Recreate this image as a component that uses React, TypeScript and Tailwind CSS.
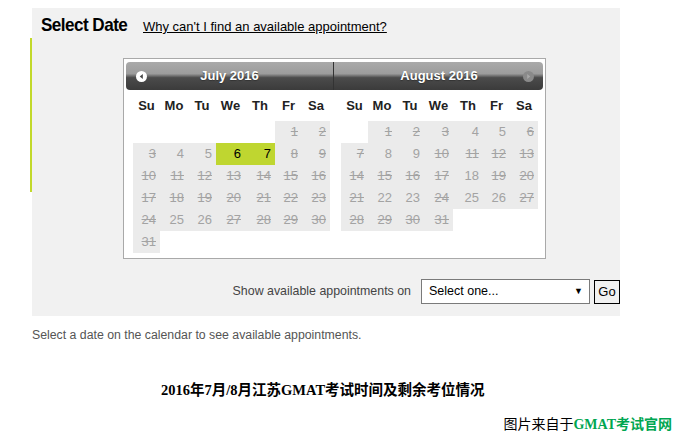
import React from 'react';

type Cell = { day?: number; plain?: boolean; hl?: boolean };

const buildMonth = (lead: number, days: number, plain: number[], hl: number[]): Cell[] => {
  const cells: Cell[] = [];
  for (let i = 0; i < lead; i++) cells.push({});
  for (let d = 1; d <= days; d++) {
    cells.push({ day: d, plain: plain.includes(d), hl: hl.includes(d) });
  }
  return cells;
};

const july = buildMonth(5, 31, [4, 5, 25, 26], [6, 7]);
const august = buildMonth(1, 31, [4, 5, 8, 9, 18, 22, 23, 25, 26], []);

const weekdays = ['Su', 'Mo', 'Tu', 'We', 'Th', 'Fr', 'Sa'];

const PrevIcon = () => (
  <svg width="11" height="11" viewBox="0 0 11 11">
    <circle cx="5.5" cy="5.5" r="5.5" fill="#ffffff" />
    <path d="M6.8 3 L3.8 5.5 L6.8 8 Z" fill="#444" />
  </svg>
);

const NextIcon = () => (
  <svg width="11" height="11" viewBox="0 0 11 11">
    <circle cx="5.5" cy="5.5" r="5.5" fill="#8a8a8a" />
    <path d="M4.2 3 L7.2 5.5 L4.2 8 Z" fill="#a8a8a8" />
  </svg>
);

const MonthGrid = ({ cells }: { cells: Cell[] }) => (
  <div className="ml-[7px]">
    <div className="grid grid-cols-[27px_28px_28px_29px_30px_27px_28px] h-[31px] items-center">
      {weekdays.map((w) => (
        <div key={w} className="text-center text-[13px] font-bold text-[#222]">
          {w}
        </div>
      ))}
    </div>
    <div className="grid grid-cols-[27px_28px_28px_29px_30px_27px_28px] auto-rows-[22px]">
      {cells.map((c, i) =>
        c.day === undefined ? (
          <div key={i} />
        ) : c.hl ? (
          <div key={i} className="bg-[#bfd630] text-right pr-[4px] text-[13px] leading-[22px] text-black">
            {c.day}
          </div>
        ) : (
          <div
            key={i}
            className={
              c.plain
                ? 'bg-[#ebebeb] text-right pr-[4px] text-[13px] leading-[22px] text-[#a3a3a3]'
                : 'bg-[#ebebeb] text-right pr-[4px] text-[13px] leading-[22px] text-[#a3a3a3] line-through'
            }
          >
            {c.day}
          </div>
        )
      )}
    </div>
  </div>
);

const Calendar = () => (
  <div className="w-[423px] h-[201px] border border-[#a9a9a9] bg-white pt-[3px] px-[2px]">
    <div className="flex h-[28px] rounded-[4px] bg-[linear-gradient(#aaaaaa,#9c9c9c_42%,#4b4b4b_56%,#3b3b3b)] text-white text-[13px] font-bold">
      <div className="w-[207px] flex items-center pl-[10px] pr-[10px]">
        <PrevIcon />
        <span className="flex-1 text-center pr-[11px] [text-shadow:0_1px_1px_#333]">July 2016</span>
      </div>
      <div className="w-px bg-[#333]" />
      <div className="flex-1 flex items-center pl-[10px] pr-[9px]">
        <span className="flex-1 text-center pl-[11px] [text-shadow:0_1px_1px_#333]">August 2016</span>
        <NextIcon />
      </div>
    </div>
    <div className="flex">
      <div className="w-[208px]">
        <MonthGrid cells={july} />
      </div>
      <div className="flex-1">
        <MonthGrid cells={august} />
      </div>
    </div>
  </div>
);

export default function App() {
  return (
    <div className="w-[676px] h-[439px] bg-white overflow-hidden font-['Liberation_Sans',Arial,sans-serif]">
      <div className="flex pt-[8px] pl-[30px]">
        <div className="mt-[30px] h-[154px] w-[2px] bg-[#c2d92b]" />
        <div className="w-[588px] h-[308px] bg-[#f1f1f1] flex flex-col">
          <div className="flex items-baseline pl-[9px] pt-[3px] h-[36px]">
            <span className="inline-block text-[19px] font-bold text-black tracking-[-0.6px] origin-left scale-x-90 w-[90px] whitespace-nowrap">
              Select Date
            </span>
            <a href="#" className="ml-[12px] text-[13px] text-black underline">
              Why can't I find an available appointment?
            </a>
          </div>
          <div className="ml-[91px] mt-[14px]">
            <Calendar />
          </div>
          <div className="flex items-center justify-end mt-[20px]">
            <span className="text-[12.4px] text-[#444]">Show available appointments on</span>
            <div className="ml-[10px] w-[169px] h-[25px] border border-[#7a7a7a] bg-white flex items-center justify-between pl-[7px] pr-[6px] text-[12.5px] text-black">
              <span>Select one...</span>
              <span className="text-[9px]">▼</span>
            </div>
            <button className="ml-[4px] w-[26px] h-[24px] border border-black bg-[#f1f1f1] text-[13px] text-black leading-none px-0">
              Go
            </button>
          </div>
        </div>
      </div>
      <p className="mt-[11px] pl-[32px] text-[12.3px] leading-[16px] text-[#555]">
        Select a date on the calendar to see available appointments.
      </p>
      <p className="mt-[37px] pl-[161px] text-[14.5px] leading-[20px] font-bold text-black font-['Liberation_Serif','Noto_Sans_CJK_SC',serif]">
        2016年7月/8月江苏GMAT考试时间及剩余考位情况
      </p>
      <p className="mt-[15px] pr-[4px] text-right text-[14px] leading-[20px] text-black font-['Liberation_Serif','Noto_Sans_CJK_SC',serif]">
        图片来自于<span className="font-bold text-[#00a651]">GMAT考试官网</span>
      </p>
    </div>
  );
}
